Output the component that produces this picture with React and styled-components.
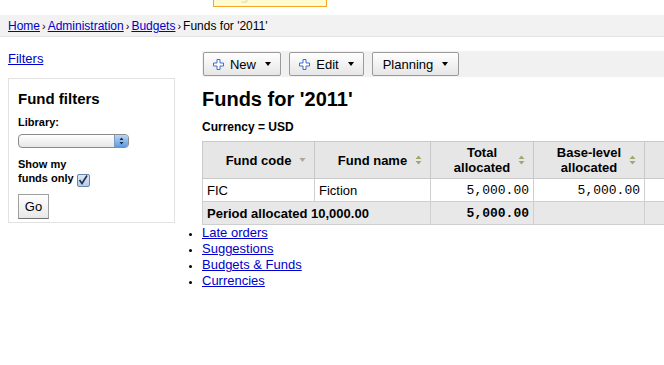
import React from 'react';
import styled, { createGlobalStyle } from 'styled-components';

const GlobalStyle = createGlobalStyle`
  html, body {
    margin: 0;
    padding: 0;
    background: #fff;
    overflow: hidden;
  }
  body {
    font-family: "Liberation Sans", Arial, sans-serif;
    font-size: 13px;
    color: #000;
  }
  a { color: #0000cc; }
`;

const Page = styled.div`
  width: 664px;
  height: 365px;
  overflow: hidden;
`;

const TopStrip = styled.div`
  height: 15px;
  display: flex;
  align-items: flex-start;
  overflow: hidden;
`;

const LoginBox = styled.div`
  margin-left: 213px;
  width: 112px;
  height: 6px;
  background: #fffbd0;
  border: 1px solid #f5a623;
  border-top: none;
  overflow: hidden;
  font-size: 13px;
  font-weight: bold;
  color: #e6e2c4;
  text-align: center;
  line-height: 14px;
  span { display: block; margin-top: -11px; }
`;

const TopLink = styled.a`
  display: block;
  margin-left: ${p => p.$gap}px;
  width: ${p => p.$w}px;
  height: 1px;
  border-top: 1px solid #0000cc;
  margin-top: -1px;
`;

const Crumbs = styled.div`
  height: 21px;
  background: #f2f2f2;
  border-bottom: 1px solid #e4e4e4;
  padding-left: 8px;
  font-size: 12px;
  line-height: 22px;
  a { color: #0000cc; }
`;

const Sep = styled.span`
  font-size: 11px;
  margin: 0 2px;
`;

const Layout = styled.div`
  display: grid;
  grid-template-columns: 167px 1fr;
  column-gap: 27px;
  padding-left: 8px;
`;

const Side = styled.div`
  padding-top: 14px;
`;

const FiltersLink = styled.a`
  display: block;
  font-size: 13px;
  line-height: 16px;
`;

const FilterBox = styled.div`
  margin-top: 11px;
  height: 145px;
  border: 1px solid #e2e2e2;
  padding: 0 9px;
  box-sizing: border-box;
`;

const BoxTitle = styled.h3`
  margin: 11px 0 0;
  font-size: 15px;
  line-height: 18px;
  font-weight: bold;
`;

const Label = styled.div`
  margin-top: 7px;
  font-size: 11px;
  font-weight: bold;
  line-height: 14px;
`;

const FakeSelect = styled.div`
  margin-top: 5px;
  width: 111px;
  height: 14px;
  border: 1px solid #8a8a8a;
  border-radius: 4px;
  box-sizing: border-box;
  background: linear-gradient(#ffffff, #e6e6e6);
  display: flex;
  justify-content: flex-end;
  overflow: hidden;
`;

const SelectArrows = styled.div`
  width: 13px;
  height: 100%;
  background: linear-gradient(#b9d6f5, #5f9be0);
  border-left: 1px solid #7a9cc4;
  display: flex;
  align-items: center;
  justify-content: center;
`;

const ShowMine = styled.div`
  margin-top: 9px;
  font-size: 11px;
  font-weight: bold;
  line-height: 14px;
`;

const Check = styled.span`
  display: inline-flex;
  vertical-align: -3px;
  margin-left: 3px;
  width: 13px;
  height: 13px;
  border: 1px solid #6a86a8;
  border-radius: 2px;
  background: linear-gradient(#dbe9f7, #b5cde6);
  box-sizing: border-box;
  align-items: center;
  justify-content: center;
`;

const GoButton = styled.button`
  margin-top: 7px;
  width: 31px;
  height: 25px;
  padding: 0;
  font-family: "Liberation Sans", Arial, sans-serif;
  font-size: 13px;
  border: 1px solid #a0a0a0;
  border-bottom-color: #707070;
  background: linear-gradient(#ffffff, #e8e8e8);
  color: #000;
`;

const Main = styled.div`
  padding-top: 14px;
  min-width: 0;
`;

const Toolbar = styled.div`
  height: 26px;
  background: #f1f1f1;
  display: flex;
  align-items: center;
  gap: 8px;
  padding-left: 1px;
`;

const ToolButton = styled.button`
  height: 24px;
  width: ${p => p.$w}px;
  display: flex;
  align-items: center;
  justify-content: center;
  gap: 6px;
  padding: 0;
  font-family: "Liberation Sans", Arial, sans-serif;
  font-size: 13px;
  color: #000;
  border: 1px solid #9a9a9a;
  border-radius: 2px;
  background: linear-gradient(#ffffff, #e6e6e6);
`;

const Caret = styled.span`
  width: 0;
  height: 0;
  margin-left: 3px;
  border-left: 3.5px solid transparent;
  border-right: 3.5px solid transparent;
  border-top: 4px solid #000;
`;

const Title = styled.h1`
  margin: 10px 0 0;
  font-size: 20px;
  line-height: 24px;
  font-weight: bold;
`;

const Currency = styled.div`
  margin-top: 9px;
  font-size: 12px;
  font-weight: bold;
  line-height: 14px;
`;

const Table = styled.table`
  margin-top: 7px;
  border-collapse: collapse;
  table-layout: fixed;
  width: 560px;
  font-size: 13px;
`;

const Th = styled.th`
  position: relative;
  height: 37px;
  padding: 0 18px;
  background: #e6e6e6;
  border: 1px solid #c9c9c9;
  font-weight: bold;
  line-height: 15px;
  text-align: center;
  box-sizing: border-box;
`;

const SortMark = styled.span`
  position: absolute;
  right: 8px;
  top: 50%;
  transform: translateY(-50%);
  display: flex;
`;

const Td = styled.td`
  height: 22px;
  padding: 0 4px;
  border: 1px solid #cfcfcf;
  background: ${p => (p.$foot ? '#e8e8e8' : '#fff')};
  font-weight: ${p => (p.$foot ? 'bold' : 'normal')};
  text-align: ${p => (p.$num ? 'right' : 'left')};
  font-family: ${p => (p.$num ? '"Liberation Mono", "Courier New", monospace' : 'inherit')};
  white-space: nowrap;
`;

const Links = styled.ul`
  margin: 0;
  padding: 0;
  list-style: disc outside;
  line-height: 16px;
  font-size: 13px;
  li::marker { font-size: 11px; }
`;

const PlusIcon = () => (
  <svg width="11" height="11" viewBox="0 0 11 11">
    <path d="M4 0.5h3v3.5h3.5v3h-3.5v3.5h-3v-3.5h-3.5v-3h3.5z" fill="#fff" stroke="#3a6fd0" strokeWidth="1" />
  </svg>
);

const SortBoth = () => (
  <svg width="7" height="10" viewBox="0 0 7 10">
    <path d="M3.5 0.5L6.5 4H0.5z M3.5 9.5L6.5 6H0.5z" fill="#a3a66a" />
  </svg>
);

const SortDown = () => (
  <svg width="7" height="5" viewBox="0 0 7 5">
    <path d="M0.5 0.5H6.5L3.5 4.5z" fill="#a8a8a0" />
  </svg>
);

const columns = [
  { key: 'code', label: 'Fund code', w: 112, sort: 'down' },
  { key: 'name', label: 'Fund name', w: 116, sort: 'both' },
  { key: 'total', label: ['Total', 'allocated'], w: 103, sort: 'both' },
  { key: 'base', label: ['Base-level', 'allocated'], w: 111, sort: 'both' },
  { key: 'spent', label: null, w: 118, sort: 'both' },
];

const HeaderLabel = ({ label }) =>
  Array.isArray(label) ? (
    <>
      {label[0]}
      <br />
      {label[1]}
    </>
  ) : (
    label
  );

export default function App() {
  return (
    <Page>
      <GlobalStyle />
      <TopStrip>
        <LoginBox><span>Log in to Koha</span></LoginBox>
        <TopLink href="#" $gap={14} $w={61} />
        <TopLink href="#" $gap={20} $w={111} />
      </TopStrip>

      <Crumbs>
        <a href="#">Home</a>
        <Sep>›</Sep>
        <a href="#">Administration</a>
        <Sep>›</Sep>
        <a href="#">Budgets</a>
        <Sep>›</Sep>
        Funds for '2011'
      </Crumbs>

      <Layout>
        <Side>
          <FiltersLink href="#">Filters</FiltersLink>
          <FilterBox>
            <BoxTitle>Fund filters</BoxTitle>
            <Label>Library:</Label>
            <FakeSelect>
              <SelectArrows>
                <svg width="5" height="8" viewBox="0 0 5 8">
                  <path d="M2.5 0.5L4.5 3H0.5z M2.5 7.5L4.5 5H0.5z" fill="#1c2c44" />
                </svg>
              </SelectArrows>
            </FakeSelect>
            <ShowMine>
              Show my
              <br />
              funds only
              <Check>
                <svg width="10" height="10" viewBox="0 0 10 10">
                  <path d="M1.5 5L4 8.5L9 0.5" fill="none" stroke="#1e2f50" strokeWidth="1.6" />
                </svg>
              </Check>
            </ShowMine>
            <GoButton>Go</GoButton>
          </FilterBox>
        </Side>

        <Main>
          <Toolbar>
            <ToolButton $w={78}>
              <PlusIcon />
              New
              <Caret />
            </ToolButton>
            <ToolButton $w={75}>
              <PlusIcon />
              Edit
              <Caret />
            </ToolButton>
            <ToolButton $w={87}>
              Planning
              <Caret />
            </ToolButton>
          </Toolbar>

          <Title>Funds for '2011'</Title>
          <Currency>Currency = USD</Currency>

          <Table>
            <colgroup>
              {columns.map(c => (
                <col key={c.key} style={{ width: c.w }} />
              ))}
            </colgroup>
            <thead>
              <tr>
                {columns.map(c => (
                  <Th key={c.key}>
                    {c.label && <HeaderLabel label={c.label} />}
                    <SortMark>{c.sort === 'down' ? <SortDown /> : <SortBoth />}</SortMark>
                  </Th>
                ))}
              </tr>
            </thead>
            <tbody>
              <tr>
                <Td>FIC</Td>
                <Td>Fiction</Td>
                <Td $num>5,000.00</Td>
                <Td $num>5,000.00</Td>
                <Td $num></Td>
              </tr>
              <tr>
                <Td $foot colSpan={2}>Period allocated 10,000.00</Td>
                <Td $foot $num>5,000.00</Td>
                <Td $foot></Td>
                <Td $foot></Td>
              </tr>
            </tbody>
          </Table>

          <Links>
            <li><a href="#">Late orders</a></li>
            <li><a href="#">Suggestions</a></li>
            <li><a href="#">Budgets &amp; Funds</a></li>
            <li><a href="#">Currencies</a></li>
          </Links>
        </Main>
      </Layout>
    </Page>
  );
}
